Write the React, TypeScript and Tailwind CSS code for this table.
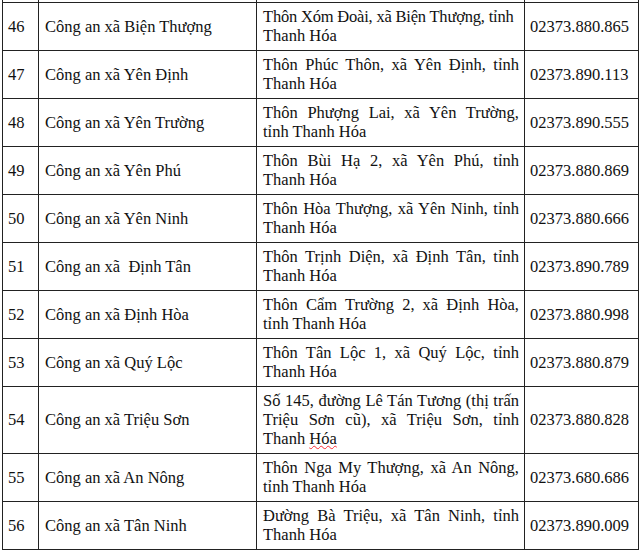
import React from "react";

type Row = { n: string; name: string; addr: React.ReactNode; phone: string };

const rows: Row[] = [
  {
    n: "46",
    name: "Công an xã Biện Thượng",
    addr: (
      <>
        <span className="whitespace-nowrap tracking-[-0.2px]">Thôn Xóm Đoài, xã Biện Thượng, tỉnh</span>
        <br />
        Thanh Hóa
      </>
    ),
    phone: "02373.880.865",
  },
  { n: "47", name: "Công an xã Yên Định", addr: "Thôn Phúc Thôn, xã Yên Định, tỉnh Thanh Hóa", phone: "02373.890.113" },
  { n: "48", name: "Công an xã Yên Trường", addr: "Thôn Phượng Lai, xã Yên Trường, tỉnh Thanh Hóa", phone: "02373.890.555" },
  { n: "49", name: "Công an xã Yên Phú", addr: "Thôn Bùi Hạ 2, xã Yên Phú, tỉnh Thanh Hóa", phone: "02373.880.869" },
  { n: "50", name: "Công an xã Yên Ninh", addr: "Thôn Hòa Thượng, xã Yên Ninh, tỉnh Thanh Hóa", phone: "02373.880.666" },
  { n: "51", name: "Công an xã  Định Tân", addr: "Thôn Trịnh Diện, xã Định Tân, tỉnh Thanh Hóa", phone: "02373.890.789" },
  { n: "52", name: "Công an xã Định Hòa", addr: "Thôn Cẩm Trường 2, xã Định Hòa, tỉnh Thanh Hóa", phone: "02373.880.998" },
  { n: "53", name: "Công an xã Quý Lộc", addr: "Thôn Tân Lộc 1, xã Quý Lộc, tỉnh Thanh Hóa", phone: "02373.880.879" },
  {
    n: "54",
    name: "Công an xã Triệu Sơn",
    addr: (
      <>
        Số 145, đường Lê Tán Tương (thị trấn Triệu Sơn cũ), xã Triệu Sơn, tỉnh Thanh{" "}
        <span className="underline decoration-wavy decoration-red-500 decoration-1 underline-offset-[1px]">Hóa</span>
      </>
    ),
    phone: "02373.880.828",
  },
  { n: "55", name: "Công an xã An Nông", addr: "Thôn Nga My Thượng, xã An Nông, tỉnh Thanh Hóa", phone: "02373.680.686" },
  { n: "56", name: "Công an xã Tân Ninh", addr: "Đường Bà Triệu, xã Tân Ninh, tỉnh Thanh Hóa", phone: "02373.890.009" },
];

export default function App() {
  const cell = "border border-[#222] align-middle";
  return (
    <div className="w-[640px] h-[552px] overflow-hidden bg-white pl-[2px] text-[#111] font-['Liberation_Serif','Times_New_Roman',serif] text-[16.5px] leading-[19px]">
      <table className="border-collapse table-fixed w-[636px]">
        <colgroup>
          <col className="w-[36px]" />
          <col className="w-[218px]" />
          <col className="w-[268px]" />
          <col className="w-[114px]" />
        </colgroup>
        <tbody>
          <tr className="h-[2px]">
            <td className="border-x border-b border-[#222] p-0 h-[2px]" />
            <td className="border-x border-b border-[#222] p-0 h-[2px]" />
            <td className="border-x border-b border-[#222] p-0 h-[2px]" />
            <td className="border-x border-b border-[#222] p-0 h-[2px]" />
          </tr>
          {rows.map((r) => (
            <tr key={r.n}>
              <td className={`${cell} pl-[5px] pr-1 pt-[4px] pb-[4px] whitespace-pre`}>{r.n}</td>
              <td className={`${cell} pl-[6px] pr-1 pt-[4px] pb-[4px] whitespace-pre`}>{r.name}</td>
              <td className={`${cell} pl-[6px] pr-[5px] pt-[4px] pb-[5px] text-justify`}>{r.addr}</td>
              <td className={`${cell} pl-[5px] pr-1 pt-[4px] pb-[4px]`}>{r.phone}</td>
            </tr>
          ))}
        </tbody>
      </table>
    </div>
  );
}
